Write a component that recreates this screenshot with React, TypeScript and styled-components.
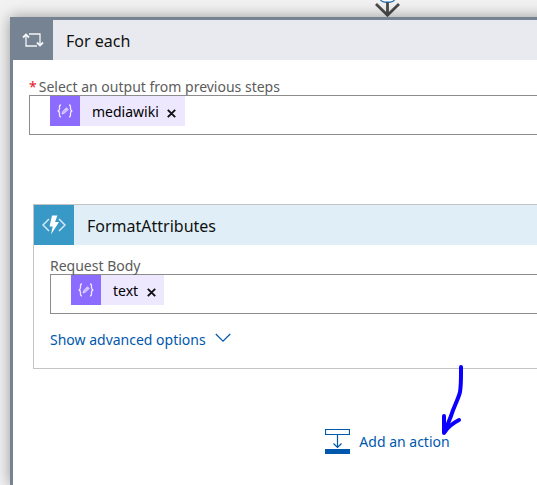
import React from "react";
import styled, { createGlobalStyle } from "styled-components";

const GlobalStyle = createGlobalStyle`
  *, *::before, *::after { box-sizing: border-box; }
  body {
    margin: 0;
    background: #f2f2f2;
    color: #111;
    font-family: "Noto Sans", "Open Sans", sans-serif;
    font-size: 14px;
    line-height: 20px;
  }
  button, input { font: inherit; color: inherit; }
`;

const Canvas = styled.main`
  display: flex;
  min-height: 100vh;
  overflow: hidden;
`;

/* The designer surface runs on beyond the right edge of the viewport. */
const Flow = styled.div`
  display: flex;
  flex: 1;
  flex-direction: column;
  margin: 0 -228px 0 10px;
`;

const Connector = styled.svg`
  display: block;
  align-self: center;
  flex: none;
`;

const LoopCard = styled.section`
  display: flex;
  flex: 1;
  flex-direction: column;
  border: solid #768393;
  border-width: 3px 3px 0;
  background: #fff;
  box-shadow: 0 0 14px rgba(0, 0, 0, 0.38);
`;

const CardHeader = styled.header<{ $tone: string }>`
  display: flex;
  align-items: center;
  height: 40px;
  background: ${(p) => p.$tone};
`;

const HeaderIcon = styled.span<{ $tone: string }>`
  display: grid;
  place-items: center;
  width: 40px;
  height: 40px;
  background: ${(p) => p.$tone};
`;

const CardTitle = styled.h2`
  margin: 0;
  padding: 2px 0 0 13px;
  font-size: 16px;
  font-weight: 400;
  line-height: 24px;
`;

const LoopBody = styled.div`
  display: flex;
  flex-direction: column;
  padding: 17px 16px 28px;
`;

const ActionCard = styled.section`
  margin: 69px 4px 0;
  border: 1px solid #c4c4c4;
  background: #fff;
`;

const ActionBody = styled.div`
  padding: 11px 16px 18px;
`;

const FieldLabel = styled.label`
  display: block;
  height: 18px;
  color: #5c5c5c;
  white-space: nowrap;
`;

const Required = styled.span`
  margin-right: 2px;
  color: #e81123;
`;

const Field = styled.div`
  display: flex;
  align-items: flex-start;
  height: 40px;
  padding-left: 20px;
  border: 1px solid #8c8c8c;
  background: #fff;
`;

const FieldInput = styled.input`
  flex: 1;
  height: 100%;
  min-width: 0;
  padding: 0 8px;
  border: 0;
  outline: 0;
  background: transparent;
`;

const TokenChip = styled.span`
  display: flex;
  align-items: center;
  height: 30px;
  padding-right: 6px;
  background: #eee8ff;
  color: #000;
`;

const TokenName = styled.span`
  padding-top: 2px;
`;

const TokenIcon = styled.span`
  display: grid;
  place-items: center;
  width: 30px;
  height: 30px;
  margin-right: 12px;
  background: #8c6cff;
`;

const RemoveButton = styled.button`
  display: grid;
  place-items: center;
  width: 14px;
  height: 20px;
  margin-left: 6px;
  padding: 4px 0 0;
  border: 0;
  background: none;
  cursor: pointer;
`;

const LinkButton = styled.button`
  display: inline-flex;
  align-items: center;
  gap: 9px;
  padding: 0;
  border: 0;
  background: none;
  color: #0058ad;
  white-space: nowrap;
  cursor: pointer;
`;

const AdvancedButton = styled(LinkButton)`
  margin-top: 16px;
`;

const Chevron = styled.svg`
  margin-bottom: 4px;
`;

const AddRow = styled.div`
  position: relative;
  display: flex;
  justify-content: center;
  margin-top: 32px;
`;

const PenArrow = styled.svg`
  position: absolute;
  top: -65px;
  left: calc(50% + 53px);
  pointer-events: none;
`;

function LoopGlyph() {
  return (
    <svg width="22" height="14" viewBox="0 0 22 14" fill="none" stroke="#f4f6f8" strokeWidth="1.3" aria-hidden="true">
      <path d="M4 2v11h11" />
      <path d="M1 4.500l3-3 3 3" strokeWidth="1.8" />
      <path d="M7 1h11v11" />
      <path d="M15 9.500l3 3 3-3" strokeWidth="1.8" />
    </svg>
  );
}

function FunctionGlyph() {
  return (
    <svg width="24" height="20" viewBox="0 0 24 20" aria-hidden="true">
      <path d="M7 4L1 10l6 6M17 4l6 6-6 6" fill="none" stroke="#d4ebf6" strokeWidth="1.5" />
      <path d="M10 .5h5.500L13 7h4L9 19.500l1.700-8H7.500z" fill="#fff" />
    </svg>
  );
}

function ExpressionGlyph() {
  return (
    <svg width="16" height="14" viewBox="0 0 16 14" fill="none" stroke="#efeaff" strokeWidth="1.3" aria-hidden="true">
      <path d="M4 1C2.700 1 2.500 1.600 2.500 2.800v2C2.500 6 2 6.700.8 7c1.200.3 1.700 1 1.700 2.200v2C2.500 12.400 2.700 13 4 13" />
      <path d="M12 1c1.300 0 1.500.6 1.500 1.800v2c0 1.200.5 1.900 1.700 2.200-1.200.3-1.700 1-1.700 2.200v2c0 1.200-.2 1.800-1.500 1.800" />
      <path d="M5 10l.7-2.500 3.800-3.800 1.700 1.700-3.800 3.800zM8.500 4.700l1.700 1.700" fill="#c6b6ff" strokeWidth=".7" />
    </svg>
  );
}

function Token({ name }: { name: string }) {
  return (
    <TokenChip>
      <TokenIcon>
        <ExpressionGlyph />
      </TokenIcon>
      <TokenName>{name}</TokenName>
      <RemoveButton type="button" aria-label={`Remove ${name}`}>
        <svg width="9" height="9" viewBox="0 0 9 9" stroke="#111" strokeWidth="1.9" aria-hidden="true">
          <path d="M.8.800l7.400 7.400M8.200.800L.8 8.200" />
        </svg>
      </RemoveButton>
    </TokenChip>
  );
}

export default function App() {
  return (
    <>
      <GlobalStyle />
      <Canvas>
        <Flow>
          <Connector width="25" height="17" viewBox="0 0 25 17" fill="none" aria-hidden="true">
            <path d="M5.500 0C7.500 3 17.500 3 19.500 0" fill="#fff" stroke="#1668b8" strokeWidth="1.300" />
            <path d="M12.500 2v13M1 4l11.500 11.200L24 4" stroke="#4a4a4a" strokeWidth="2.800" />
          </Connector>
          <LoopCard>
            <CardHeader $tone="#e9eaef">
              <HeaderIcon $tone="#768393">
                <LoopGlyph />
              </HeaderIcon>
              <CardTitle>For each</CardTitle>
            </CardHeader>
            <LoopBody>
              <FieldLabel htmlFor="loop-source">
                <Required>*</Required>Select an output from previous steps
              </FieldLabel>
              <Field>
                <Token name="mediawiki" />
                <FieldInput id="loop-source" type="text" />
              </Field>
              <ActionCard>
                <CardHeader $tone="#e0eff7">
                  <HeaderIcon $tone="#3999c6">
                    <FunctionGlyph />
                  </HeaderIcon>
                  <CardTitle>FormatAttributes</CardTitle>
                </CardHeader>
                <ActionBody>
                  <FieldLabel htmlFor="request-body">Request Body</FieldLabel>
                  <Field>
                    <Token name="text" />
                    <FieldInput id="request-body" type="text" />
                  </Field>
                  <AdvancedButton type="button">
                    Show advanced options
                    <Chevron width="16" height="10" viewBox="0 0 16 10" fill="none" stroke="currentColor" strokeWidth="1.200" aria-hidden="true">
                      <path d="M.8 1L8 8.200 15.200 1" />
                    </Chevron>
                  </AdvancedButton>
                </ActionBody>
              </ActionCard>
            </LoopBody>
            <AddRow>
              <LinkButton type="button">
                <svg width="25" height="25" viewBox="0 0 25 25" fill="none" stroke="currentColor" aria-hidden="true">
                  <path d="M.5.500h24v5H.5zM12.500 5.500V18M8.500 14.500l4 4 4-4" strokeWidth="1.200" />
                  <path d="M0 20h25v5H0z" fill="currentColor" stroke="none" />
                </svg>
                Add an action
              </LinkButton>
              <PenArrow width="24" height="72" viewBox="0 0 24 72" fill="none" stroke="#0b00ff" strokeWidth="4" strokeLinecap="round" strokeLinejoin="round" aria-hidden="true">
                <path d="M20 3c0 9 .3 17-1 25-2 8-6 14-9 24L4 67" />
                <path d="M3 52v17c3-5 9-10 15-13" />
              </PenArrow>
            </AddRow>
          </LoopCard>
        </Flow>
      </Canvas>
    </>
  );
}
